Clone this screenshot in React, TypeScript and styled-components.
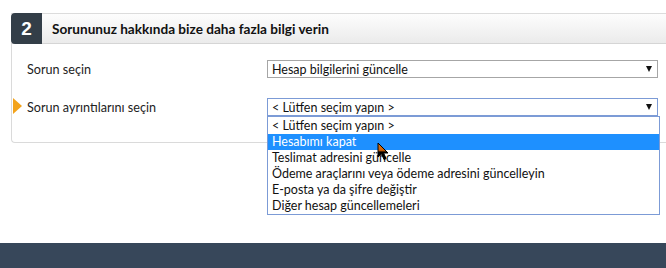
import styled, { createGlobalStyle } from 'styled-components';

const GlobalStyle = createGlobalStyle`
  html, body {
    margin: 0;
    padding: 0;
    background: #fff;
  }
  body {
    font-family: Lato, 'Liberation Sans', Arial, sans-serif;
    color: #111;
  }
`;

const Page = styled.div`
  width: 666px;
  height: 268px;
  display: flex;
  flex-direction: column;
  overflow: hidden;
  position: relative;
`;

const Section = styled.section`
  flex: 1;
  padding: 13px 0 0 11px;
`;

const Box = styled.div`
  width: 680px;
`;

const Header = styled.div`
  display: flex;
  align-items: stretch;
  height: 29px;
  border-top: 1px solid #dcdcdc;
  border-bottom: 1px solid #d5d5d5;
  background: linear-gradient(#fdfdfd, #ebebeb);
`;

const Badge = styled.div`
  width: 31px;
  margin: -1px 0;
  display: flex;
  align-items: center;
  justify-content: center;
  background: #333e48;
  color: #fff;
  font-family: 'Liberation Sans', Arial, sans-serif;
  font-weight: 700;
  font-size: 19px;
  border-radius: 4px 0 0 4px;
`;

const Title = styled.h2`
  margin: 0;
  padding-left: 10px;
  display: flex;
  align-items: center;
  font-size: 13.6px;
  font-weight: 700;
  color: #111;
`;

const Body = styled.div`
  border-left: 1px solid #dadada;
  border-bottom: 1px solid #dadada;
  border-bottom-left-radius: 4px;
  padding: 16px 0 26px 15px;
  display: flex;
  flex-direction: column;
  gap: 20px;
`;

const Row = styled.div`
  position: relative;
  display: grid;
  grid-template-columns: 240px 391px;
  align-items: center;
`;

const Label = styled.label`
  font-size: 12.6px;
  color: #222;
`;

const Marker = styled.span`
  position: absolute;
  left: -14px;
  top: 0;
  width: 0;
  height: 0;
  border-top: 8.5px solid transparent;
  border-bottom: 8.5px solid transparent;
  border-left: 9px solid #f3a31b;
`;

const Select = styled.div<{ $focused?: boolean }>`
  position: relative;
  height: 18px;
  box-sizing: border-box;
  border: 1px solid ${(p) => (p.$focused ? '#7c9bd6' : '#a6a6a6')};
  display: flex;
  align-items: center;
  justify-content: space-between;
  padding: 0 5px 0 4px;
  font-size: 12.5px;
  color: #111;
  background: #fff;
`;

const Caret = styled.span`
  width: 0;
  height: 0;
  border-left: 3.5px solid transparent;
  border-right: 3.5px solid transparent;
  border-top: 6px solid #111;
`;

const List = styled.ul`
  position: absolute;
  left: -1px;
  right: -3px;
  top: 17px;
  margin: 0;
  padding: 1px 0 0;
  list-style: none;
  background: #fff;
  border: 1px solid #7c9bd6;
  z-index: 2;
`;

const Item = styled.li<{ $active?: boolean }>`
  height: 16px;
  line-height: 16px;
  padding-left: 4px;
  font-size: 12.5px;
  white-space: nowrap;
  background: ${(p) => (p.$active ? '#1e90ff' : 'transparent')};
  color: ${(p) => (p.$active ? '#fff' : '#111')};
`;

const Pointer = styled.svg`
  position: absolute;
  left: 377px;
  top: 142px;
  z-index: 3;
`;

const Footer = styled.footer`
  height: 25px;
  background: #37475a;
`;

const options = [
  '< Lütfen seçim yapın >',
  'Hesabımı kapat',
  'Teslimat adresini güncelle',
  'Ödeme araçlarını veya ödeme adresini güncelleyin',
  'E-posta ya da şifre değiştir',
  'Diğer hesap güncellemeleri',
];

export default function App() {
  return (
    <Page>
      <GlobalStyle />
      <Section>
        <Box>
          <Header>
            <Badge>2</Badge>
            <Title>Sorununuz hakkında bize daha fazla bilgi verin</Title>
          </Header>
          <Body>
            <Row>
              <Label>Sorun seçin</Label>
              <Select>
                Hesap bilgilerini güncelle
                <Caret />
              </Select>
            </Row>
            <Row>
              <Marker />
              <Label>Sorun ayrıntılarını seçin</Label>
              <Select $focused>
                &lt; Lütfen seçim yapın &gt;
                <Caret />
                <List>
                  {options.map((o, i) => (
                    <Item key={o} $active={i === 1}>
                      {o}
                    </Item>
                  ))}
                </List>
              </Select>
            </Row>
          </Body>
        </Box>
      </Section>
      <Footer />
      <Pointer width="13" height="20" viewBox="0 0 13 20">
        <defs>
          <linearGradient id="pg" x1="0" y1="0" x2="0" y2="1">
            <stop offset="0" stopColor="#e07a10" />
            <stop offset="0.45" stopColor="#c85e08" />
            <stop offset="0.55" stopColor="#000" />
            <stop offset="1" stopColor="#000" />
          </linearGradient>
        </defs>
        <path
          d="M1 1 L1 15 L4.5 11.8 L7 17.5 L9 16.6 L6.6 11 L11 11 Z"
          fill="url(#pg)"
          stroke="#000"
          strokeWidth="1"
          strokeLinejoin="round"
        />
      </Pointer>
    </Page>
  );
}
